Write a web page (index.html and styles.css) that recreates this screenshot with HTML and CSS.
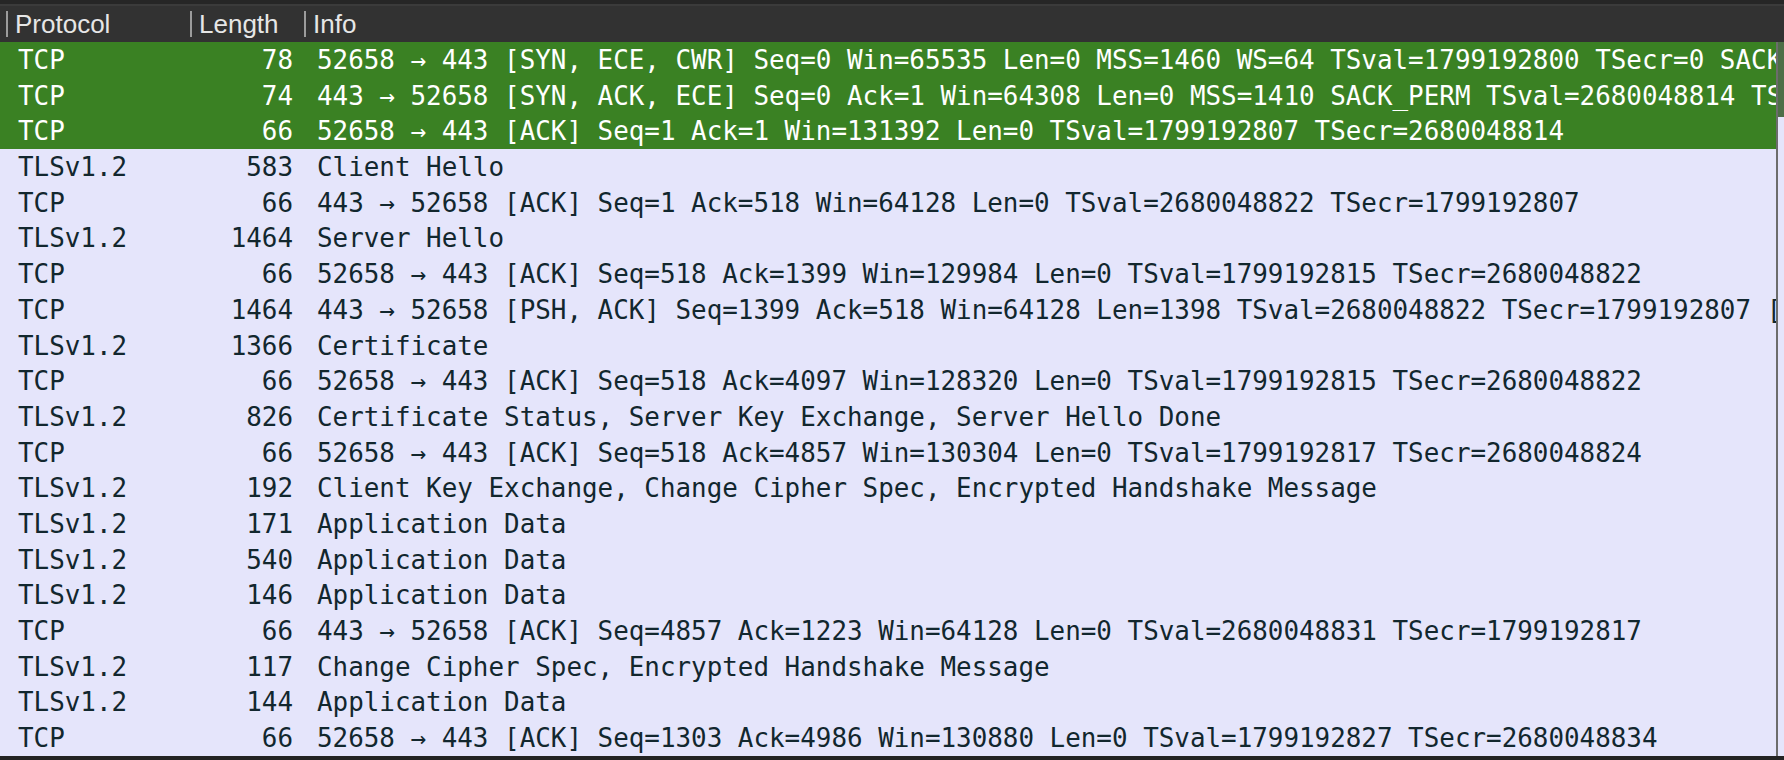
FILE: index.html
```html
<!DOCTYPE html>
<html>
<head>
<meta charset="utf-8">
<link rel="stylesheet" href="styles.css">
</head>
<body>
<div class="app">
  <div class="topbar"></div>
  <div class="header">
    <div class="hcell"><span class="hlabel">Protocol</span></div>
    <div class="hcell"><span class="hlabel">Length</span></div>
    <div class="hcell"><span class="hlabel">Info</span></div>
  </div>
  <div class="body">
    <div class="list">
      <div class="row sel"><span class="proto">TCP</span><span class="len">78</span><span class="info">52658 → 443 [SYN, ECE, CWR] Seq=0 Win=65535 Len=0 MSS=1460 WS=64 TSval=1799192800 TSecr=0 SACK_PERM</span></div>
      <div class="row sel"><span class="proto">TCP</span><span class="len">74</span><span class="info">443 → 52658 [SYN, ACK, ECE] Seq=0 Ack=1 Win=64308 Len=0 MSS=1410 SACK_PERM TSval=2680048814 TSecr=1799192800 WS=128</span></div>
      <div class="row sel"><span class="proto">TCP</span><span class="len">66</span><span class="info">52658 → 443 [ACK] Seq=1 Ack=1 Win=131392 Len=0 TSval=1799192807 TSecr=2680048814</span></div>
      <div class="row"><span class="proto">TLSv1.2</span><span class="len">583</span><span class="info">Client Hello</span></div>
      <div class="row"><span class="proto">TCP</span><span class="len">66</span><span class="info">443 → 52658 [ACK] Seq=1 Ack=518 Win=64128 Len=0 TSval=2680048822 TSecr=1799192807</span></div>
      <div class="row"><span class="proto">TLSv1.2</span><span class="len">1464</span><span class="info">Server Hello</span></div>
      <div class="row"><span class="proto">TCP</span><span class="len">66</span><span class="info">52658 → 443 [ACK] Seq=518 Ack=1399 Win=129984 Len=0 TSval=1799192815 TSecr=2680048822</span></div>
      <div class="row"><span class="proto">TCP</span><span class="len">1464</span><span class="info">443 → 52658 [PSH, ACK] Seq=1399 Ack=518 Win=64128 Len=1398 TSval=2680048822 TSecr=1799192807 [TCP segment of a reassembled PDU]</span></div>
      <div class="row"><span class="proto">TLSv1.2</span><span class="len">1366</span><span class="info">Certificate</span></div>
      <div class="row"><span class="proto">TCP</span><span class="len">66</span><span class="info">52658 → 443 [ACK] Seq=518 Ack=4097 Win=128320 Len=0 TSval=1799192815 TSecr=2680048822</span></div>
      <div class="row"><span class="proto">TLSv1.2</span><span class="len">826</span><span class="info">Certificate Status, Server Key Exchange, Server Hello Done</span></div>
      <div class="row"><span class="proto">TCP</span><span class="len">66</span><span class="info">52658 → 443 [ACK] Seq=518 Ack=4857 Win=130304 Len=0 TSval=1799192817 TSecr=2680048824</span></div>
      <div class="row"><span class="proto">TLSv1.2</span><span class="len">192</span><span class="info">Client Key Exchange, Change Cipher Spec, Encrypted Handshake Message</span></div>
      <div class="row"><span class="proto">TLSv1.2</span><span class="len">171</span><span class="info">Application Data</span></div>
      <div class="row"><span class="proto">TLSv1.2</span><span class="len">540</span><span class="info">Application Data</span></div>
      <div class="row"><span class="proto">TLSv1.2</span><span class="len">146</span><span class="info">Application Data</span></div>
      <div class="row"><span class="proto">TCP</span><span class="len">66</span><span class="info">443 → 52658 [ACK] Seq=4857 Ack=1223 Win=64128 Len=0 TSval=2680048831 TSecr=1799192817</span></div>
      <div class="row"><span class="proto">TLSv1.2</span><span class="len">117</span><span class="info">Change Cipher Spec, Encrypted Handshake Message</span></div>
      <div class="row"><span class="proto">TLSv1.2</span><span class="len">144</span><span class="info">Application Data</span></div>
      <div class="row"><span class="proto">TCP</span><span class="len">66</span><span class="info">52658 → 443 [ACK] Seq=1303 Ack=4986 Win=130880 Len=0 TSval=1799192827 TSecr=2680048834</span></div>
    </div>
    <div class="minimap">
      <div class="mm-green"></div>
      <div class="mm-rest"></div>
    </div>
  </div>
  <div class="bottombar"></div>
</div>
</body>
</html>
```

FILE: styles.css
```css
* { box-sizing: border-box; }
html, body {
  margin: 0;
  padding: 0;
  width: 1784px;
  height: 760px;
  overflow: hidden;
  background: #232323;
}
.app {
  display: flex;
  flex-direction: column;
  width: 1784px;
  height: 760px;
}
.topbar {
  height: 6px;
  background: #262626;
  border-bottom: 2px solid #3b3b3b;
}
.header {
  height: 36px;
  background: #323232;
  display: grid;
  grid-template-columns: 184px 114px 1fr;
  padding-left: 6px;
  align-items: center;
  font-family: "Liberation Sans", Arial, sans-serif;
  font-size: 26px;
  color: #e6e6e6;
}
.hcell {
  height: 26px;
  border-left: 2px solid #9c9c9c;
  padding-left: 7px;
  display: flex;
  align-items: center;
}
.hlabel { line-height: 26px; }
.body {
  flex: 1;
  display: flex;
  min-height: 0;
}
.list {
  flex: 1;
  min-width: 0;
  display: flex;
  flex-direction: column;
  background: #e5e5fb;
  overflow: hidden;
}
.row {
  height: 35.7px;
  flex: 0 0 35.7px;
  display: grid;
  grid-template-columns: 191px 114px 1fr;
  align-items: center;
  font-family: "DejaVu Sans Mono", monospace;
  font-size: 25.9px;
  line-height: 35.7px;
  padding-top: 1px;
  color: #12272e;
  background: #e5e5fb;
  white-space: nowrap;
}
.row.sel {
  background: #3a8123;
  color: #ffffff;
}
.proto { padding-left: 18px; }
.len { text-align: right; padding-right: 12px; }
.info { padding-left: 12px; overflow: hidden; }
.minimap {
  width: 8px;
  border-left: 2px solid #6c6c6c;
  display: flex;
  flex-direction: column;
}
.mm-green {
  height: 75px;
  background: #4e6e47;
}
.mm-rest {
  flex: 1;
  background: #e5e5fb;
}
.bottombar {
  height: 4px;
  background: #232323;
}
```
